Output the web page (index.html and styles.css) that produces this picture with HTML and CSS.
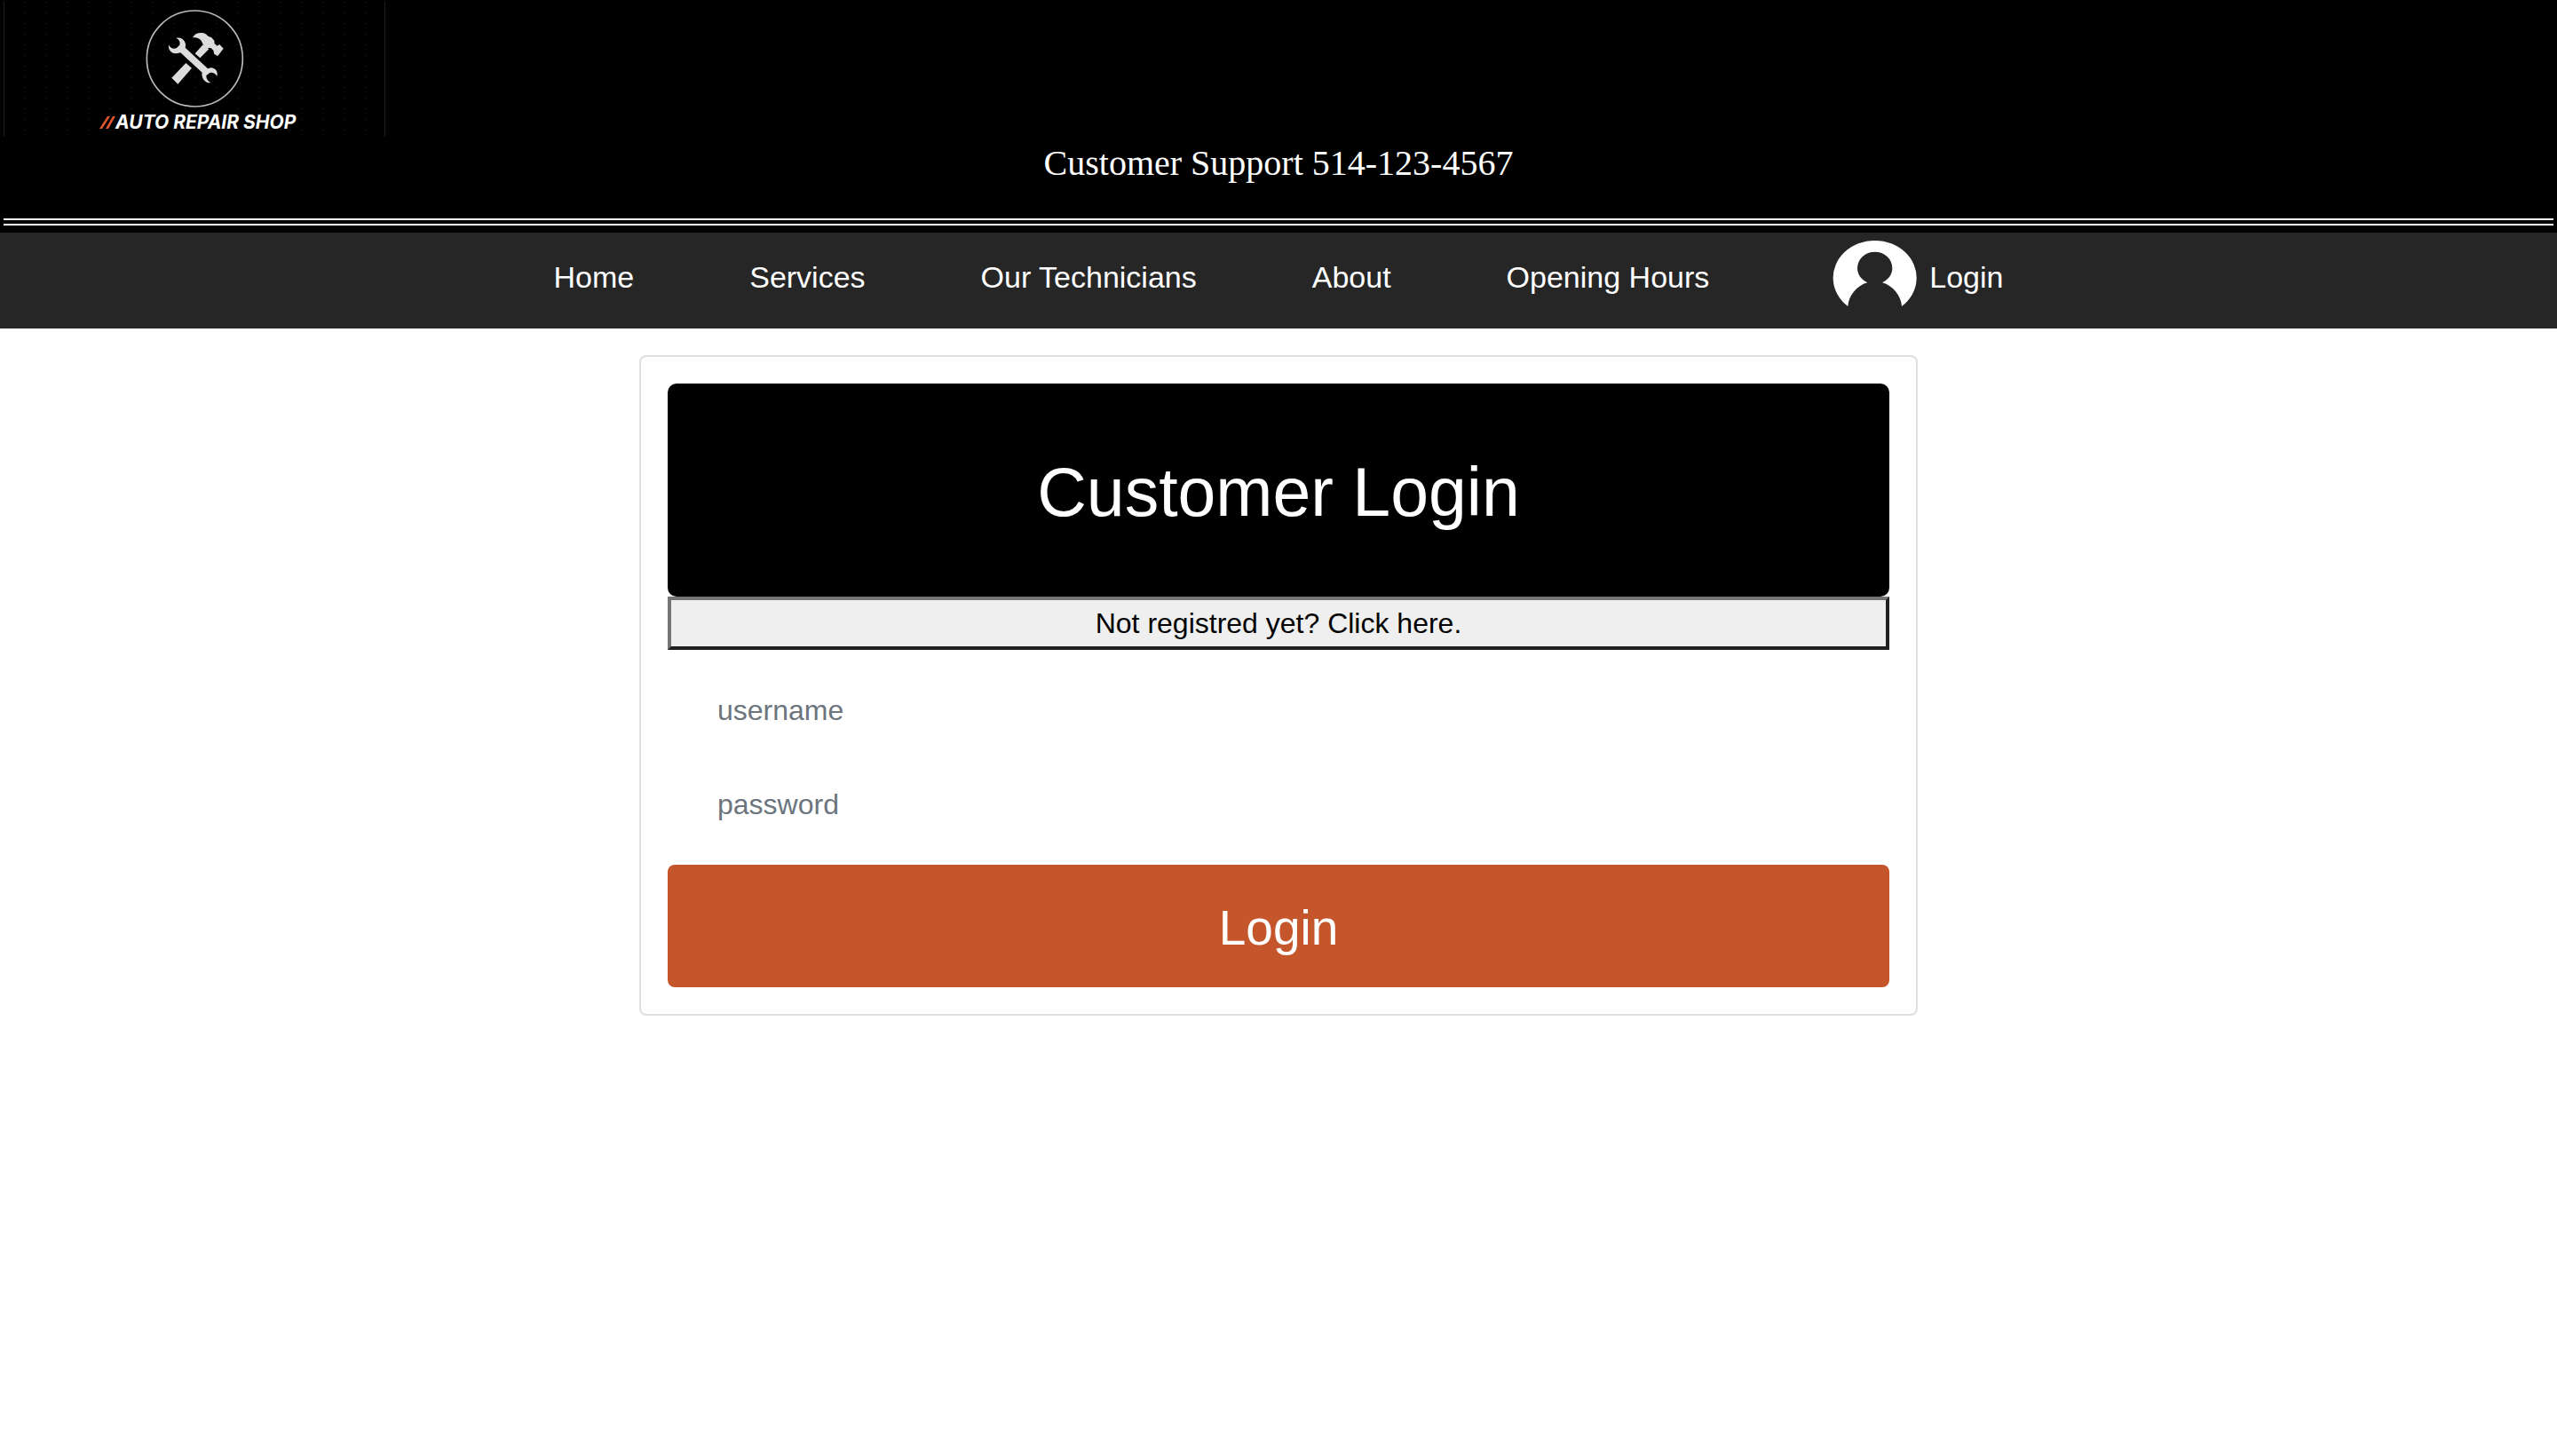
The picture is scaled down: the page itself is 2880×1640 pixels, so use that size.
FILE: index.html
```html
<!DOCTYPE html>
<html lang="en">
<head>
<meta charset="utf-8">
<meta name="viewport" content="width=device-width, initial-scale=1">
<title>Auto Repair Shop</title>
<link rel="stylesheet" href="styles.css">
</head>
<body>
<header class="header">
  <svg class="logo" viewBox="0 0 430 152" role="img" aria-label="Auto Repair Shop">
    <defs>
      <pattern id="dots" x="6" y="0" width="12" height="12" patternUnits="userSpaceOnUse">
        <rect x="5" y="0" width="2" height="1" fill="#141414"/>
      </pattern>
    </defs>
    <rect width="430" height="152" fill="url(#dots)"/>
    <path d="M.5 0V152M429.500 0V152" stroke="#202020"/>
    <g transform="translate(146 -2) scale(.3333)" fill="#dcdcdc">
      <circle cx="208" cy="198" r="162" fill="none" stroke="#b9b9b9" stroke-width="5"/>
      <path d="M130 263L178 213L198 230L151 284Z"/>
      <path d="M209 181L236 151L256 166L226 196Z"/>
      <path d="M201 127C208 113 222 109 238 112C246 114 252 122 256 124L264 126L274 137L275 147L283 155L292 150L305 164L286 189L274 183L271 170L262 162L246 163L236 150L232 142C228 131 216 126 201 127Z"/>
      <path d="M120 151C117 170 131 184 150 180L160 178L233 245C229 262 242 281 263 280C252 274 246 266 247 255L259 246C270 244 277 249 283 257C288 243 278 230 263 229L252 232L176 161C182 144 168 123 145 128C156 133 160 142 157 152L146 163C134 167 125 162 120 151Z"/>
    </g>
    <text class="logo-text" x="126" y="143">AUTO REPAIR SHOP</text>
    <path d="M108 143L117 129H120L111 143ZM115 143L123 129H126L118 143Z" fill="#e2552f"/>
  </svg>
  <p class="support">Customer Support 514-123-4567</p>
  <div class="rule"></div>
</header>
<nav class="nav">
  <a href="#home">Home</a>
  <a href="#services">Services</a>
  <a href="#technicians">Our Technicians</a>
  <a href="#about">About</a>
  <a href="#hours">Opening Hours</a>
  <a class="nav-login" href="#login">
    <svg class="avatar" viewBox="39 33 324 276" aria-hidden="true">
      <path fill="#fff" d="M118 270A141 126 0 1 1 300 270C298 235 270 200 234 190C253 181 268 164 268 141A59 55 0 0 0 150 141C150 164 165 181 184 190C148 200 120 235 118 270Z"/>
    </svg>
    <span>Login</span>
  </a>
</nav>
<main class="main">
  <form class="card" id="login">
    <h1 class="title">Customer Login</h1>
    <button class="register" type="button">Not registred yet? Click here.</button>
    <div class="fields">
      <input class="field" type="text" placeholder="username" aria-label="username">
      <input class="field" type="password" placeholder="password" aria-label="password">
    </div>
    <button class="submit" type="submit">Login</button>
  </form>
</main>
</body>
</html>
```
FILE: styles.css
```css
* {
  box-sizing: border-box;
}

body {
  margin: 0;
  background: #fff;
  font-family: "Liberation Sans", Arial, sans-serif;
  font-size: 32px;
}

.header {
  padding: 2px 4px 8px;
  background: #000;
  color: #fff;
}

.logo {
  display: block;
  width: 430px;
  height: 152px;
}

.logo-text {
  fill: #fff;
  font-family: Inter, sans-serif;
  font-size: 21px;
  font-weight: 700;
  font-style: italic;
}

.support {
  margin: 6px 0 38px;
  font-family: "Liberation Serif", serif;
  font-size: 40px;
  line-height: 48px;
  text-align: center;
}

.rule {
  height: 8px;
  border: solid #fff;
  border-width: 2px 0;
}

.nav {
  display: flex;
  flex-wrap: wrap;
  align-items: center;
  justify-content: center;
  gap: 0 130px;
  min-height: 108px;
  padding-bottom: 8px;
  background: #262626;
}

.nav a {
  color: #fff;
  font-size: 34px;
  line-height: 48px;
  text-decoration: none;
}

.nav .nav-login {
  display: flex;
  align-items: center;
  gap: 10px;
}

.avatar {
  width: 108px;
  height: 92px;
}

.main {
  display: flex;
  justify-content: center;
  padding: 30px 0;
}

.card {
  display: flex;
  flex-direction: column;
  width: 50%;
  min-width: 720px;
  padding: 30px;
  border: 2px solid #dfdfdf;
  border-radius: 8px;
}

.title {
  margin: 0;
  padding: 74px 32px 70px;
  border-radius: 10px;
  background: #000;
  color: #fff;
  font-size: 77px;
  font-weight: 400;
  line-height: 96px;
  text-align: center;
}

.register {
  padding: 0;
  border: 4px solid;
  border-color: #767676 #212121 #212121 #767676;
  background: #efefef;
  color: #000;
  font: inherit;
  line-height: 52px;
}

.fields {
  display: flex;
  flex-direction: column;
  gap: 30px;
  padding: 30px 0;
}

.field {
  height: 76px;
  padding: 0 56px;
  border: 0;
  background: #fff;
  font: inherit;
}

.field::placeholder {
  color: #6c757d;
  opacity: 1;
}

.submit {
  padding: 32px 30px 28px;
  border: 0;
  border-radius: 8px;
  background: #c5562c;
  color: #fff;
  font: inherit;
  font-size: 55px;
  line-height: 78px;
}
```
